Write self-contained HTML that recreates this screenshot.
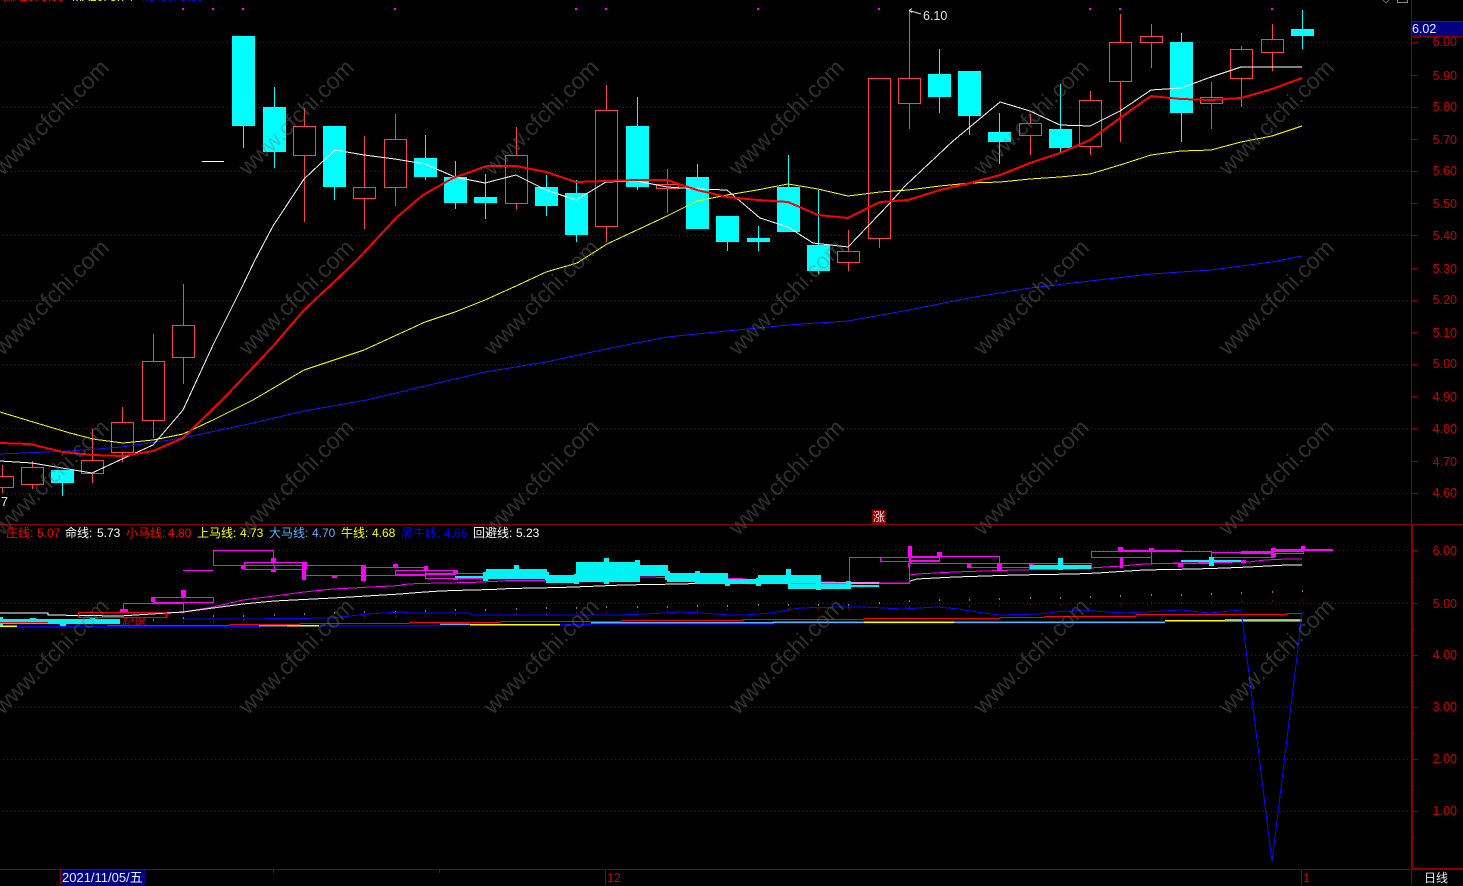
<!DOCTYPE html>
<html lang="zh">
<head>
<meta charset="utf-8">
<title>K线图</title>
<style>
html,body{margin:0;padding:0;background:#000;width:1463px;height:886px;overflow:hidden}
svg{display:block;position:absolute;left:0;top:0}
text{font-family:"Liberation Sans","WenQuanYi Zen Hei","Noto Sans CJK SC",sans-serif}
.ax{font-size:12.5px;fill:#c80000;text-anchor:end}
.lg{font-size:12px}
.wm{font-size:23px;fill:#787878;fill-opacity:.4;text-anchor:middle}
polyline{shape-rendering:crispEdges}
</style>
</head>
<body>
<svg width="1463" height="886" viewBox="0 0 1463 886" xmlns="http://www.w3.org/2000/svg">
<rect width="1463" height="886" fill="#000"/>

<!-- clipped top legend -->
<text x="3" y="1" class="lg" fill="#ff0000">MA10: 5.89</text>
<text x="72" y="1" class="lg" fill="#ffff00">MA20: 5.74</text>
<text x="142" y="1" class="lg" fill="#0000ff">MA60: 5.33</text>

<!-- top icons -->
<path d="M1383 0l3 3 3-3" fill="none" stroke="#666"/>
<path d="M1397.500 0v2.500h10V0" fill="none" stroke="#888"/>

<!-- grids -->
<g stroke="#6a0c0c" stroke-dasharray="1 3" fill="none" shape-rendering="crispEdges">
<path d="M3 42.500H1411M3 107.500H1411M3 171.500H1411M3 235.500H1411M3 300.500H1411M3 364.500H1411M3 428.500H1411M3 493.500H1411"/>
<path d="M3 550.500H1411M3 603.500H1411M3 655.500H1411M3 707.500H1411M3 759.500H1411M3 811.500H1411"/>
</g>

<!-- magenta top dots -->
<path d="M182 9h2M212 9h2M242 9h2M394 9h2M575 9h2M605 9h2M757 9h2M878 9h2M1089 9h2M1119 9h2M1271 9h2" stroke="#ff00ff" stroke-width="2" shape-rendering="crispEdges"/>

<!-- red candles -->
<g shape-rendering="crispEdges" fill="none" stroke="#f84444">
<path d="M2.500 465V476M2.500 487V493M32.500 461V467M32.500 484V489M92.500 429V460M92.500 473V483M122.500 407V422M122.500 452V462M153.500 334V361M153.500 420V438M183.500 284V325M183.500 357V384M304.500 108V126M304.500 155V222M364.500 136V187M364.500 198V229M395.500 114V139M395.500 187V206M516.500 127V155M516.500 203V209M606.500 85V110M606.500 226V242M667.500 169V184M667.500 188V213M848.500 230V251M848.500 262V271M879.500 238V248M909.500 10V78M909.500 103V129M1030.500 114V123M1030.500 135V155M1090.500 91V100M1090.500 146V155M1120.500 14V42M1120.500 81V142M1151.500 24V36M1151.500 42V68M1211.500 82V97M1211.500 103V129M1241.500 46V49M1241.500 78V107M1272.500 24V39M1272.500 52V71"/>
<rect x="-8.500" y="476.500" width="22" height="11"/>
<rect x="21.500" y="467.500" width="22" height="17"/>
<rect x="81.500" y="460.500" width="22" height="13"/>
<rect x="111.500" y="422.500" width="22" height="30"/>
<rect x="142.500" y="361.500" width="22" height="59"/>
<rect x="172.500" y="325.500" width="22" height="32"/>
<rect x="293.500" y="126.500" width="22" height="29"/>
<rect x="353.500" y="187.500" width="22" height="11"/>
<rect x="384.500" y="139.500" width="22" height="48"/>
<rect x="505.500" y="155.500" width="22" height="48"/>
<rect x="595.500" y="110.500" width="22" height="116"/>
<rect x="656.500" y="184.500" width="22" height="4"/>
<rect x="837.500" y="251.500" width="22" height="11"/>
<rect x="868.500" y="78.500" width="22" height="160"/>
<rect x="898.500" y="78.500" width="22" height="25"/>
<rect x="1019.500" y="123.500" width="22" height="12"/>
<rect x="1079.500" y="100.500" width="22" height="46"/>
<rect x="1109.500" y="42.500" width="22" height="39"/>
<rect x="1140.500" y="36.500" width="22" height="6"/>
<rect x="1200.500" y="97.500" width="22" height="6"/>
<rect x="1230.500" y="49.500" width="22" height="29"/>
<rect x="1261.500" y="39.500" width="22" height="13"/>
</g>

<!-- cyan wicks -->
<path shape-rendering="crispEdges" stroke="#00ffff" fill="none" d="M62.500 483V496M243.500 126V148M274.500 87V168M334.500 187V200M425.500 135V180M455.500 161V209M485.500 174V219M546.500 175V216M576.500 180V242M637.500 97V190M697.500 164V229M727.500 242V251M758.500 226V251M788.500 155V232M818.500 190V274M939.500 49V113M969.500 116V135M999.500 113V164M1060.500 84V152M1181.500 33V142M1302.500 10V49"/>
<!-- cyan bodies -->
<g fill="#00ffff" shape-rendering="crispEdges">
<rect x="51" y="470" width="23" height="13"/>
<rect x="232" y="36" width="23" height="90"/>
<rect x="263" y="107" width="23" height="45"/>
<rect x="323" y="126" width="23" height="61"/>
<rect x="414" y="158" width="23" height="19"/>
<rect x="444" y="177" width="23" height="26"/>
<rect x="474" y="197" width="23" height="6"/>
<rect x="535" y="187" width="23" height="19"/>
<rect x="565" y="193" width="23" height="42"/>
<rect x="626" y="126" width="23" height="61"/>
<rect x="686" y="177" width="23" height="52"/>
<rect x="716" y="216" width="23" height="26"/>
<rect x="747" y="238" width="23" height="4"/>
<rect x="777" y="187" width="23" height="45"/>
<rect x="807" y="245" width="23" height="26"/>
<rect x="928" y="74" width="23" height="23"/>
<rect x="958" y="71" width="23" height="45"/>
<rect x="988" y="132" width="23" height="10"/>
<rect x="1049" y="129" width="23" height="19"/>
<rect x="1170" y="42" width="23" height="71"/>
<rect x="1291" y="29" width="23" height="7"/>
</g>
<path d="M202 161.500H224" stroke="#fff" stroke-width="1" shape-rendering="crispEdges"/>

<!-- MA lines upper -->
<polyline fill="none" stroke="#1414ff" stroke-width="1" points="0,454 70,451 122,447 183,438 253,423 304,411 367,400 425,386 485,372 546,362 606,349 667,337 727,331 788,325 848,321 909,310 969,298 1030,288 1090,281 1151,274 1211,270 1272,262 1302,256"/>
<polyline fill="none" stroke="#ffff00" stroke-width="1" points="0,412 33,422 70,433 93,439 123,443 153,440 183,434 213,420 253,400 304,370 334,360 364,350 425,322 455,312 485,300 516,286 546,272 577,263 607,244 637,230 667,216 697,201 727,195 757,190 788,184 818,189 848,196 880,192 908,190 940,186 970,183 1000,182 1030,179 1060,177 1090,174 1120,165 1151,155 1181,151 1211,150 1241,142 1272,136 1302,126"/>
<polyline fill="none" stroke="#ffffff" stroke-width="1" points="0,461 32,463 62,468 92,473 122,459 153,445 183,410 213,345 243,285 255,260 273,226 304,179 335,150 364,155 395,159 425,164 455,177 485,183 516,175 546,190 576,200 606,182 637,181 667,187 697,189 727,190 760,218 788,227 813,243 848,247 890,203 905,186 953,141 1000,102 1030,111 1060,125 1090,126 1120,111 1151,90 1181,88 1211,77 1241,67 1272,67 1302,67"/>
<polyline fill="none" stroke="#ff0000" stroke-width="2" points="0,443 30,444 63,452 92,455 123,456 153,451 183,438 222,400 243,378 274,345 304,310 334,282 357,260 397,217 423,195 453,178 487,166 516,166 546,172 576,182 606,181 637,180 667,180 697,190 727,197 758,200 788,202 818,215 848,218 880,202 908,200 940,190 970,183 1000,175 1030,163 1060,153 1090,140 1120,118 1151,96 1181,99 1211,100 1241,98 1272,89 1302,78"/>

<!-- price high label -->
<path d="M909 10.500L921 14M909 10.500l3-2M909 10.500l3 2" fill="none" stroke="#ddd" stroke-width="1"/>
<text x="923" y="20" font-size="12.500" fill="#dde6ee">6.10</text>
<text x="1" y="506" font-size="12.500" fill="#e8eef8">7</text>

<!-- axes -->
<g stroke="#8b0000" fill="none" shape-rendering="crispEdges">
<path d="M1411.500 0V524"/>
<path d="M0 524.500H1463"/>
<path d="M0 869.500H1463"/>
<path d="M1412 42.500h6M1412 75.500h6M1412 107.500h6M1412 139.500h6M1412 171.500h6M1412 203.500h6M1412 235.500h6M1412 268.500h6M1412 300.500h6M1412 332.500h6M1412 364.500h6M1412 396.500h6M1412 428.500h6M1412 461.500h6M1412 493.500h6"/>
<path d="M1412 550.500h6M1412 577.500h3M1412 603.500h6M1412 629.500h3M1412 655.500h6M1412 681.500h3M1412 707.500h6M1412 733.500h3M1412 759.500h6M1412 785.500h3M1412 811.500h6M1412 837.500h3"/>
<path d="M60.500 870V885M145 870V885M273.500 870V873M439.500 870V873M605.500 870V885M1301.500 870V885M1411.500 870V885"/>
</g>
<rect x="1411" y="524" width="2" height="346" fill="#8b0000" shape-rendering="crispEdges"/>
<rect x="1412" y="868" width="51" height="2" fill="#8b0000" shape-rendering="crispEdges"/>

<!-- axis labels -->
<text class="ax" x="1457" y="46">6.00</text>
<text class="ax" x="1457" y="80">5.90</text>
<text class="ax" x="1457" y="111">5.80</text>
<text class="ax" x="1457" y="144">5.70</text>
<text class="ax" x="1457" y="175">5.60</text>
<text class="ax" x="1457" y="208">5.50</text>
<text class="ax" x="1457" y="240">5.40</text>
<text class="ax" x="1457" y="273">5.30</text>
<text class="ax" x="1457" y="304">5.20</text>
<text class="ax" x="1457" y="337">5.10</text>
<text class="ax" x="1457" y="368">5.00</text>
<text class="ax" x="1457" y="401">4.90</text>
<text class="ax" x="1457" y="433">4.80</text>
<text class="ax" x="1457" y="466">4.70</text>
<text class="ax" x="1457" y="497">4.60</text>
<text class="ax" x="1457" y="555">6.00</text>
<text class="ax" x="1457" y="608">5.00</text>
<text class="ax" x="1457" y="659">4.00</text>
<text class="ax" x="1457" y="711">3.00</text>
<text class="ax" x="1457" y="763">2.00</text>
<text class="ax" x="1457" y="815">1.00</text>

<rect x="1412" y="21" width="51" height="16" fill="#000080"/>
<path d="M1412 21.500H1463M1412 36.500H1463" stroke="#8b0000" shape-rendering="crispEdges"/>
<text x="1412" y="33" font-size="12.500" fill="#e6eefc">6.02</text>

<!-- zhang marker -->
<rect x="872" y="510" width="14" height="14" fill="#8b0000"/>
<text x="873" y="521" font-size="12" fill="#f4d8d8">涨</text>

<!-- lower legend -->
<g class="lg">
<text x="6" y="537" fill="#ff0000">庄线:</text><text x="37" y="537" fill="#ff0000">5.07</text>
<text x="65" y="537" fill="#ffffff">命线:</text><text x="97" y="537" fill="#ffffff">5.73</text>
<text x="126" y="537" fill="#ff0000">小马线:</text><text x="168" y="537" fill="#ff0000">4.80</text>
<text x="197" y="537" fill="#ffff00">上马线:</text><text x="240" y="537" fill="#ffff00">4.73</text>
<text x="269" y="537" fill="#55b4ff">大马线:</text><text x="312" y="537" fill="#55b4ff">4.70</text>
<text x="341" y="537" fill="#ffff00">牛线:</text><text x="372" y="537" fill="#ffff00">4.68</text>
<text x="401" y="537" fill="#0000ff">黑牛线:</text><text x="444" y="537" fill="#0000ff">4.66</text>
<text x="473" y="537" fill="#ffffff">回避线:</text><text x="516" y="537" fill="#ffffff">5.23</text>
</g>

<!-- lower pane: magenta boxes -->
<g fill="none" stroke="#ff00ff" shape-rendering="crispEdges">
<path d="M183 570.500H213"/>
<rect x="213.500" y="550.500" width="60" height="15"/>
<rect x="244.500" y="562.500" width="62" height="7"/>
<rect x="274.500" y="565.500" width="31" height="4"/>
<rect x="304.500" y="565.500" width="61" height="10"/>
<rect x="365.500" y="567.500" width="60" height="8"/>
<rect x="395.500" y="570.500" width="60" height="4"/>
<rect x="425.500" y="573.500" width="60" height="5"/>
<rect x="123.500" y="603.500" width="60" height="9"/>
<rect x="153.500" y="597.500" width="60" height="5"/>
<rect x="849.500" y="557.500" width="60" height="26"/>
<rect x="880.500" y="557.500" width="59" height="4"/>
<rect x="910.500" y="556.500" width="89" height="7"/>
<rect x="967.500" y="563.500" width="62" height="4"/>
<rect x="1029.500" y="563.500" width="62" height="5"/>
<rect x="1091.500" y="551.500" width="60" height="6"/>
<rect x="1151.500" y="551.500" width="60" height="12"/>
<rect x="1211.500" y="552.500" width="62" height="5"/>
<rect x="1241.500" y="551.500" width="62" height="2"/>
<path d="M728 578.500H743M821 582.500H847"/>
</g>
<g fill="#ff00ff" shape-rendering="crispEdges">
<rect x="181" y="590" width="5" height="7"/>
<rect x="151" y="597" width="4" height="5"/>
<rect x="120" y="609" width="8" height="3"/>
<rect x="167" y="612" width="9" height="1"/>
<rect x="241" y="566" width="4" height="3"/>
<rect x="271" y="558" width="5" height="4"/>
<rect x="271" y="569" width="5" height="3"/>
<rect x="302" y="562" width="4" height="18"/>
<rect x="332" y="575" width="5" height="3"/>
<rect x="361" y="566" width="5" height="15"/>
<rect x="393" y="564" width="5" height="3"/>
<rect x="363" y="576" width="3" height="5"/>
<rect x="424" y="566" width="4" height="4"/>
<rect x="453" y="570" width="5" height="4"/>
<rect x="453" y="578" width="5" height="2"/>
<rect x="908" y="546" width="4" height="11"/>
<rect x="908" y="563" width="2" height="4"/>
<rect x="937" y="552" width="5" height="4"/>
<rect x="910" y="560" width="29" height="2"/>
<rect x="967" y="564" width="4" height="3"/>
<rect x="997" y="563" width="5" height="8"/>
<rect x="1029" y="564" width="4" height="3"/>
<rect x="1118" y="547" width="5" height="4"/>
<rect x="1118" y="550" width="64" height="2"/>
<rect x="1120" y="557" width="3" height="11"/>
<rect x="1149" y="548" width="5" height="4"/>
<rect x="1178" y="563" width="5" height="4"/>
<rect x="1241" y="560" width="5" height="3"/>
<rect x="1271" y="549" width="62" height="2"/>
<rect x="1271" y="548" width="5" height="3"/>
<rect x="1271" y="553" width="5" height="4"/>
<rect x="1301" y="546" width="4" height="4"/>
</g>
<polyline fill="none" stroke="#ff00ff" points="183,612 213,607 243,600 274,596 304,592 333,589 400,585.500 403,584.500 418,583.500 470,582.500 493,581.500 510,580.500 543,580.500 637,577 713,578 821,582 850,582.500 909,583"/>
<polyline fill="none" stroke="#ff00ff" points="910,575 917,574 954,572 984,571 1015,570 1074,569 1090,568 1122,566 1144,564 1182,563 1249,562 1265,560 1287,559 1302,559"/>
<polyline fill="none" stroke="#ffffff" stroke-width="1" points="0,613 48,613 48,615 120,616 183,612 213,608 243,604 274,601 333,598 400,594 418,592.500 440,591 470,590 493,589.500 510,588.500 560,587.500 600,586 622,585 680,584 715,583 790,583 879,583"/>
<polyline fill="none" stroke="#ffffff" stroke-width="1" points="910,581 917,579 955,577 1015,575 1074,574 1098,573 1128,571 1144,570 1195,569 1225,568 1249,567 1287,565 1302,565"/>

<!-- lower dots -->
<path shape-rendering="crispEdges" stroke="#ffffff" d="M153 620h1M183 618h1M213 616h1M243 616h1M274 615h1M304 614h1M334 613h1M364 612h1M395 612h1M425 611h1M455 610h1M485 610h1M516 609h1M546 608h1M576 608h1M606 607h1M637 607h1M667 607h1M697 606h1M727 606h1M758 605h1M788 605h1M818 605h1M848 605h1M879 603h1M909 601h1M939 600h1M969 600h1M999 599h1M1030 598h1M1060 598h1M1090 597h1M1120 596h1M1151 595h1M1181 595h1M1211 594h1M1241 593h1M1272 592h1M1302 591h1"/>
<path shape-rendering="crispEdges" stroke="#ff0000" d="M183 622h1M213 621h1M243 620h1M274 619h1M304 618h1M334 618h1M364 617h1M395 617h1M425 616h1M455 615h1M485 615h1M516 614h1M546 614h1M576 613h1M606 612h1M637 612h1M667 611h1M697 611h1M727 610h1M758 610h1M788 609h1M818 609h1M848 608h1M879 608h1M909 607h1M939 607h1M969 606h1M999 606h1M1030 605h1M1060 605h1M1090 604h1M1120 604h1M1151 603h1M1181 603h1M1211 602h1M1241 602h1M1272 601h1M1302 600h1"/>

<!-- cyan chunks lower -->
<g fill="#00f2f2" shape-rendering="crispEdges">
<rect x="0" y="617" width="3" height="9"/>
<rect x="0" y="619" width="120" height="5"/>
<rect x="30" y="618" width="6" height="6"/>
<rect x="60" y="620" width="6" height="6"/>
<rect x="90" y="617" width="5" height="6"/>
<rect x="455" y="576" width="28" height="2"/>
<rect x="483" y="572" width="5" height="9"/>
<rect x="486" y="569" width="29" height="10"/>
<rect x="514" y="565" width="5" height="14"/>
<rect x="519" y="569" width="28" height="10"/>
<rect x="545" y="572" width="4" height="8"/>
<rect x="546" y="575" width="30" height="8"/>
<rect x="574" y="574" width="5" height="10"/>
<rect x="576" y="562" width="30" height="20"/>
<rect x="604" y="558" width="5" height="26"/>
<rect x="609" y="562" width="26" height="20"/>
<rect x="635" y="560" width="5" height="22"/>
<rect x="637" y="565" width="31" height="11"/>
<rect x="665" y="571" width="5" height="9"/>
<rect x="667" y="573" width="28" height="9"/>
<rect x="695" y="571" width="5" height="13"/>
<rect x="697" y="573" width="31" height="11"/>
<rect x="725" y="580" width="5" height="6"/>
<rect x="728" y="579" width="28" height="5"/>
<rect x="756" y="578" width="5" height="8"/>
<rect x="758" y="575" width="28" height="9"/>
<rect x="786" y="569" width="5" height="15"/>
<rect x="791" y="575" width="30" height="8"/>
<rect x="788" y="584" width="28" height="5"/>
<rect x="816" y="575" width="5" height="15"/>
<rect x="818" y="584" width="33" height="5"/>
<rect x="846" y="581" width="5" height="8"/>
<rect x="851" y="585" width="28" height="2"/>
<rect x="1030" y="565" width="61" height="4"/>
<rect x="1058" y="558" width="5" height="12"/>
<rect x="1181" y="560" width="60" height="2"/>
<rect x="1209" y="557" width="5" height="9"/>
</g>

<!-- bottom lines lower -->
<path fill="none" stroke="#ff0000" stroke-width="1" shape-rendering="crispEdges" d="M0 622.500H48M107 625.500H180V625.500H230V624.500H300V623.500H410V622.500H500V621.500H622V620.500H743V619.500H864V618.500H1000V617.500H1045V616.500H1136V614.500H1287V613.500H1302"/>
<rect x="78.500" y="612.500" width="88" height="5" fill="none" stroke="#ff0000" shape-rendering="crispEdges"/>
<text x="122" y="627" font-size="12" fill="#d00000">起爆</text>
<path fill="none" stroke="#0000ff" stroke-width="1.500" shape-rendering="crispEdges" d="M0 626.500H260V625.500H440V624.500H590V623.500H773V623H1165"/>
<path fill="none" stroke="#ffff00" stroke-width="1.500" shape-rendering="crispEdges" d="M0 626H17M287 625.500H319M470 624.500H560M864 622H954M1165 620.500H1302"/>
<path fill="none" stroke="#55b4ff" stroke-width="1.500" shape-rendering="crispEdges" d="M259 625.500H287M440 624H470M591 622.500H773V622H864M954 622H1165M1225 619.500H1302"/>
<polyline fill="none" stroke="#0808ff" stroke-width="1" points="183,619 243,619 333,618 367,614 400,612 410,613 470,613 472,615 530,615 620,615 645,614 665,613 680,612 700,613 730,615 745,615 770,613 800,608 840,607 864,607 902,609 937,607 959,609 977,612 999,615 1039,614 1055,612 1082,610 1106,612 1126,613 1182,610 1209,613 1241,610 1243,625 1272,862 1299,640 1302,612"/>

<!-- bottom bar -->
<rect x="61" y="870" width="84" height="15" fill="#000080"/>
<text x="62" y="882" font-size="13" fill="#e8eefc">2021/11/05/五</text>
<text x="607" y="882" font-size="12.500" fill="#c00000">12</text>
<text x="1303" y="882" font-size="12.500" fill="#c00000">1</text>
<text x="1424" y="882" font-size="12" fill="#e8e8e8">日线</text>

<!-- watermarks -->
<g>
<text class="wm" transform="translate(51 117) rotate(-45)" y="8">www.cfchi.com</text>
<text class="wm" transform="translate(296 117) rotate(-45)" y="8">www.cfchi.com</text>
<text class="wm" transform="translate(541 117) rotate(-45)" y="8">www.cfchi.com</text>
<text class="wm" transform="translate(786 117) rotate(-45)" y="8">www.cfchi.com</text>
<text class="wm" transform="translate(1031 117) rotate(-45)" y="8">www.cfchi.com</text>
<text class="wm" transform="translate(1276 117) rotate(-45)" y="8">www.cfchi.com</text>
<text class="wm" transform="translate(51 297) rotate(-45)" y="8">www.cfchi.com</text>
<text class="wm" transform="translate(296 297) rotate(-45)" y="8">www.cfchi.com</text>
<text class="wm" transform="translate(541 297) rotate(-45)" y="8">www.cfchi.com</text>
<text class="wm" transform="translate(786 297) rotate(-45)" y="8">www.cfchi.com</text>
<text class="wm" transform="translate(1031 297) rotate(-45)" y="8">www.cfchi.com</text>
<text class="wm" transform="translate(1276 297) rotate(-45)" y="8">www.cfchi.com</text>
<text class="wm" transform="translate(51 477) rotate(-45)" y="8">www.cfchi.com</text>
<text class="wm" transform="translate(296 477) rotate(-45)" y="8">www.cfchi.com</text>
<text class="wm" transform="translate(541 477) rotate(-45)" y="8">www.cfchi.com</text>
<text class="wm" transform="translate(786 477) rotate(-45)" y="8">www.cfchi.com</text>
<text class="wm" transform="translate(1031 477) rotate(-45)" y="8">www.cfchi.com</text>
<text class="wm" transform="translate(1276 477) rotate(-45)" y="8">www.cfchi.com</text>
<text class="wm" transform="translate(51 656) rotate(-45)" y="8">www.cfchi.com</text>
<text class="wm" transform="translate(296 656) rotate(-45)" y="8">www.cfchi.com</text>
<text class="wm" transform="translate(541 656) rotate(-45)" y="8">www.cfchi.com</text>
<text class="wm" transform="translate(786 656) rotate(-45)" y="8">www.cfchi.com</text>
<text class="wm" transform="translate(1031 656) rotate(-45)" y="8">www.cfchi.com</text>
<text class="wm" transform="translate(1276 656) rotate(-45)" y="8">www.cfchi.com</text>
</g>
</svg>
</body>
</html>
